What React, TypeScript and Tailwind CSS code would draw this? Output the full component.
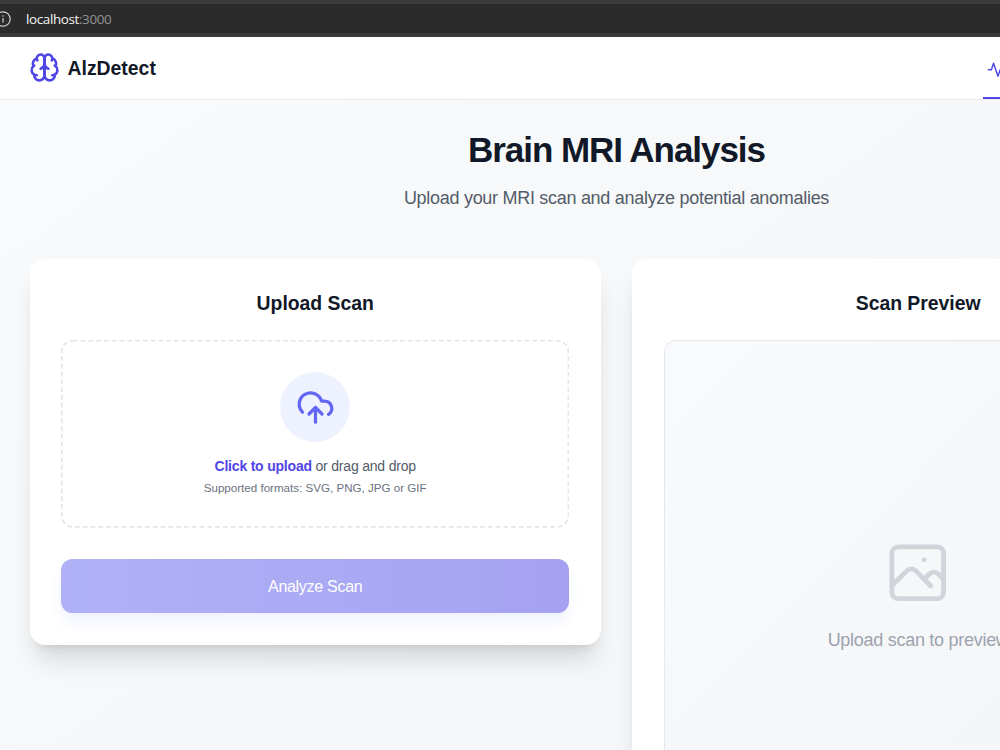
import type { ReactNode } from "react";

function BrainIcon() {
  return (
    <svg className="size-[31px] text-[#4f46e5]" viewBox="0 0 24 24" fill="none" stroke="currentColor" strokeWidth="2" strokeLinecap="round" strokeLinejoin="round">
      <path d="M12 5a3 3 0 1 0-5.997.125 4 4 0 0 0-2.526 5.77 4 4 0 0 0 .556 6.588A4 4 0 1 0 12 18Z" />
      <path d="M12 5a3 3 0 1 1 5.997.125 4 4 0 0 1 2.526 5.77 4 4 0 0 1-.556 6.588A4 4 0 1 1 12 18Z" />
      <path d="M15 13a4.5 4.5 0 0 1-3-4 4.5 4.5 0 0 1-3 4" />
      <path d="M17.599 6.5a3 3 0 0 0 .399-1.375" />
      <path d="M6.003 5.125A3 3 0 0 0 6.401 6.5" />
      <path d="M3.477 10.896a4 4 0 0 1 .585-.396" />
      <path d="M19.938 10.5a4 4 0 0 1 .585.396" />
      <path d="M6 18a4 4 0 0 1-1.967-.516" />
      <path d="M19.967 17.484A4 4 0 0 1 18 18" />
    </svg>
  );
}

function UploadIcon() {
  return (
    <svg className="size-[39px] text-[#6366f1]" viewBox="0 0 24 24" fill="none" stroke="currentColor" strokeWidth="2" strokeLinecap="round" strokeLinejoin="round">
      <path d="M4 14.899A7 7 0 1 1 15.71 8h1.79a4.5 4.5 0 0 1 2.5 8.242" />
      <path d="M12 12v9" />
      <path d="m16 16-4-4-4 4" />
    </svg>
  );
}

function PhotoIcon() {
  return (
    <svg className="size-[77.5px] text-[#d1d5db]" viewBox="0 0 24 24" fill="none" stroke="currentColor" strokeWidth="1.5" strokeLinecap="round" strokeLinejoin="round">
      <path d="M4 16l4.586-4.586a2 2 0 012.828 0L16 16m-2-2l1.586-1.586a2 2 0 012.828 0L20 14m-6-6h.01M6 20h12a2 2 0 002-2V6a2 2 0 00-2-2H6a2 2 0 00-2 2v12a2 2 0 002 2z" />
    </svg>
  );
}

function ActivityIcon() {
  return (
    <svg className="size-[17.5px] shrink-0" viewBox="0 0 24 24" fill="none" stroke="currentColor" strokeWidth="2" strokeLinecap="round" strokeLinejoin="round">
      <path d="M22 12h-4l-3 9L9 3l-3 9H2" />
    </svg>
  );
}

function AddressBar() {
  return (
    <div className="flex h-[37px] shrink-0 items-center border-t-[4px] border-b-[4px] border-[#3b3b3b] bg-[#2b2b2b] font-['Open_Sans',sans-serif]">
      <svg className="-ml-[5px] size-4 shrink-0 text-[#d0d0d0]" viewBox="0 0 16 16" fill="none" stroke="currentColor" strokeWidth="1.2">
        <circle cx="8" cy="8" r="7.2" />
        <path d="M8 7v4.5M8 4.3v1.4" />
      </svg>
      <span className="ml-[15px] pt-px text-[13.4px] tracking-[-0.35px] text-[#f5f5f5]">
        localhost<span className="text-[#929292]">:3000</span>
      </span>
    </div>
  );
}

function DashedOutline() {
  return (
    <svg className="pointer-events-none absolute inset-0 size-full text-[#e2e4e7]" viewBox="0 0 509 188" fill="none" stroke="currentColor" strokeWidth="1.7">
      <rect x="0.8" y="0.6" width="507.2" height="186.4" rx="11" strokeDasharray="4.8 3" />
    </svg>
  );
}

function Card({ title, className, children }: { title: string; className: string; children: ReactNode }) {
  return (
    <section className={`rounded-[15.5px] bg-white pt-[31px] shadow-[0_20px_25px_-5px_rgba(0,0,0,0.12),0_8px_10px_-6px_rgba(0,0,0,0.1)] ${className}`}>
      <h2 className="mb-[23px] text-center text-[19.4px] leading-[27px] font-bold tracking-[-0.03px] text-[#111827]">{title}</h2>
      {children}
    </section>
  );
}

export default function App() {
  return (
    <div className="flex h-[750px] w-[1000px] flex-col overflow-hidden bg-white font-['Liberation_Sans',sans-serif]">
      <AddressBar />
      <header className="flex h-[62.5px] shrink-0 items-center justify-between border-b border-[#e8eaed] bg-white pl-[29px]">
        <div className="flex items-center gap-[7.5px]">
          <BrainIcon />
          <span className="pt-px text-[19.4px] font-bold text-[#111827]">AlzDetect</span>
        </div>
        <nav className="flex h-full w-[17px] overflow-hidden">
          <a className="flex h-[62px] w-[110px] shrink-0 items-center border-b-2 border-[#4f46e5] pt-[5px] pl-[3.5px] text-[#4f46e5]">
            <ActivityIcon />
          </a>
        </nav>
      </header>
      <div className="min-h-0 flex-1 overflow-hidden">
        <main className="h-[900px] w-[1233px] bg-linear-to-br from-[#f8fafc] to-[#f3f4f6] px-[30px] pt-[30.5px]">
          <h1 className="text-center text-[35px] leading-[39px] font-bold tracking-[-1.05px] text-[#111827]">Brain MRI Analysis</h1>
          <p className="mt-[15.5px] text-center text-[18px] leading-[27px] tracking-[-0.29px] text-[#535c69]">Upload your MRI scan and analyze potential anomalies</p>
          <div className="mt-[47.5px] flex items-start gap-[31.5px]">
            <Card title="Upload Scan" className="h-[385.5px] w-[571px] pr-[31.4px] pl-[31px]">
              <div className="relative flex h-[188px] flex-col items-center rounded-[12px] pt-[32px]">
                <DashedOutline />
                <div className="flex size-[70px] items-center justify-center rounded-full bg-[#eef2ff]">
                  <UploadIcon />
                </div>
                <p className="mt-[14.5px] text-[14px] leading-[19px] tracking-[-0.2px] text-[#535c69]">
                  <span className="font-bold text-[#4f46e5]">Click to upload</span> or drag and drop
                </p>
                <p className="mt-[4.5px] text-[11.6px] leading-[16px] text-[#6b7280]">Supported formats: SVG, PNG, JPG or GIF</p>
              </div>
              <button className="mt-[31px] block h-[54px] w-full rounded-[11.5px] bg-linear-to-r from-[#6366f1] to-[#4f46e5] pt-[2px] text-[16px] tracking-[-0.29px] text-white opacity-50 shadow-[0_10px_15px_-3px_#e0e7ff,0_4px_6px_-4px_#e0e7ff]">
                Analyze Scan
              </button>
            </Card>
            <Card title="Scan Preview" className="h-[640px] w-[571px] pr-[31px] pl-[32px]">
              <div className="flex h-[520px] flex-col items-center rounded-[11.5px] border border-[#e5e7eb] bg-linear-to-br from-[#f8fafc] to-[#f3f4f6] pt-[193px]">
                <PhotoIcon />
                <p className="mt-[15.5px] text-[18px] leading-[27px] tracking-[-0.28px] text-[#9ca3af]">Upload scan to preview</p>
              </div>
            </Card>
          </div>
        </main>
      </div>
    </div>
  );
}
